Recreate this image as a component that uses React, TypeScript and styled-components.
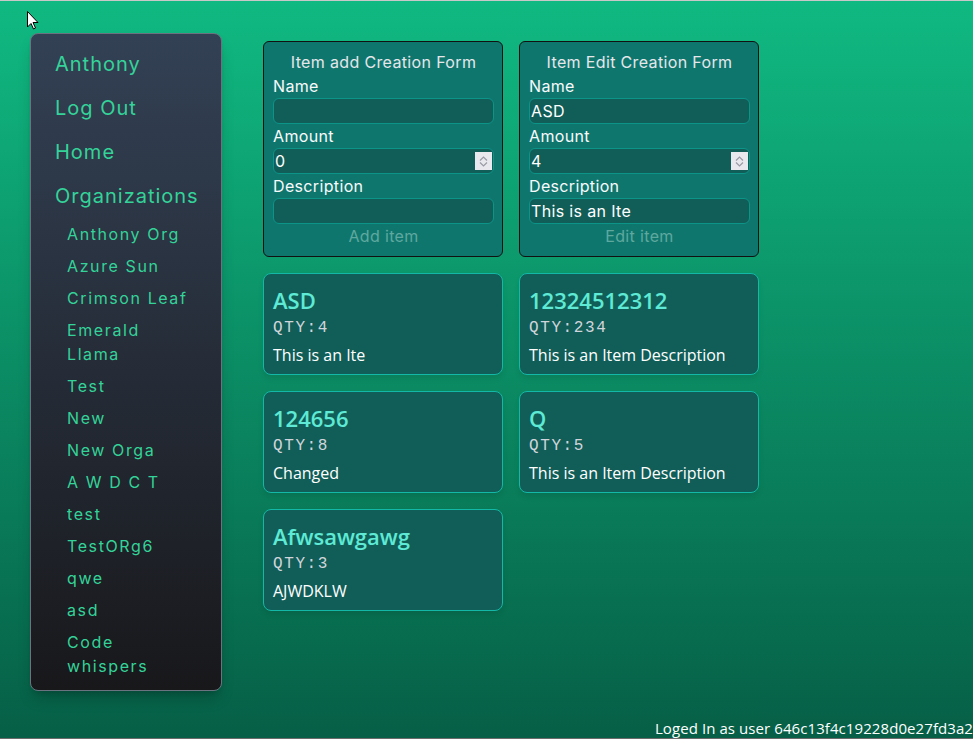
import React from "react";
import styled, { createGlobalStyle } from "styled-components";

const Global = createGlobalStyle`
  html, body { margin: 0; padding: 0; }
  body { font-family: Inter, "Noto Sans", sans-serif; }
  * { box-sizing: border-box; }
`;

const Page = styled.div`
  position: relative;
  min-height: 100vh;
  display: flex;
  flex-direction: column;
  background: linear-gradient(to bottom, #10b981, #065f46);
  border-top: 1px solid #c8c8c8;
  border-bottom: 1px solid #6b6b6b;
  overflow: hidden;
`;

const Layout = styled.div`
  display: flex;
  align-items: flex-start;
  gap: 41px;
  padding: 32px 0 0 30px;
`;

const Sidebar = styled.nav`
  width: 192px;
  display: flex;
  flex-direction: column;
  padding: 16px 24px 12px 24px;
  border: 1px solid #6b7280;
  border-radius: 8px;
  background: linear-gradient(to bottom, #334155, #18181b);
  box-shadow: 0 10px 15px -3px rgba(0, 0, 0, 0.2), 0 4px 6px -4px rgba(0, 0, 0, 0.2);
`;

const NavLink = styled.a<{ $last?: boolean }>`
  display: block;
  font-size: 20px;
  line-height: 28px;
  letter-spacing: 0.05em;
  color: #34d399;
  margin-bottom: ${(p) => (p.$last ? "0" : "16px")};
  text-decoration: none;
`;

const OrgList = styled.div`
  display: flex;
  flex-direction: column;
  gap: 8px;
  margin-top: 12px;
  padding-left: 12px;
`;

const OrgLink = styled.a`
  display: block;
  max-width: 124px;
  font-size: 16px;
  line-height: 24px;
  letter-spacing: 0.1em;
  color: #34d399;
  text-decoration: none;
`;

const Content = styled.main`
  display: grid;
  grid-template-columns: 240px 240px;
  gap: 16px;
  margin-top: 8px;
  align-items: start;
`;

const FormCard = styled.form`
  display: flex;
  flex-direction: column;
  padding: 8px 8px 8px 9px;
  background: #0f766e;
  border: 1px solid #111;
  border-radius: 6px;
  color: #fff;
  letter-spacing: 0.35px;
`;

const FormTitle = styled.div`
  text-align: center;
  font-size: 16px;
  line-height: 24px;
  color: #e5e7eb;
`;

const Label = styled.label`
  font-size: 16px;
  line-height: 24px;
  color: #f9fafb;
`;

const FieldWrap = styled.div`
  position: relative;
  width: 221px;
`;

const Input = styled.input`
  display: block;
  width: 100%;
  height: 26px;
  padding: 0 1px;
  border: 1px solid #0d9488;
  border-radius: 6px;
  background: #115e59;
  color: #fff;
  font-family: Inter, "Noto Sans", sans-serif;
  font-size: 16px;
  letter-spacing: 0.35px;
  outline: none;
`;

const Spinner = styled.div`
  position: absolute;
  right: 2px;
  top: 4px;
  width: 17px;
  height: 18px;
  background: #e8e8ee;
  display: flex;
  flex-direction: column;
  align-items: center;
  justify-content: center;
  gap: 1px;
`;

const SubmitButton = styled.button`
  align-self: center;
  background: none;
  border: none;
  padding: 0;
  font-family: Inter, "Noto Sans", sans-serif;
  font-size: 16px;
  line-height: 24px;
  letter-spacing: 0.35px;
  color: #5fa89f;
`;

const ItemCard = styled.div`
  display: flex;
  flex-direction: column;
  padding: 10px 9px 7px;
  background: #115e59;
  border: 1px solid #14b8a6;
  border-radius: 8px;
  box-shadow: 0 4px 6px -1px rgba(0, 0, 0, 0.1);
`;

const ItemTitle = styled.h2`
  margin: 0;
  font-family: "Open Sans", "Noto Sans", sans-serif;
  font-weight: 600;
  font-size: 22px;
  line-height: 32px;
  color: #5eead4;
`;

const Qty = styled.div`
  font-family: "Liberation Mono", "DejaVu Sans Mono", monospace;
  font-size: 16px;
  line-height: 24px;
  letter-spacing: 0.1em;
  color: #d1d5db;
`;

const Desc = styled.p`
  margin: 3px 0 0;
  font-family: "Open Sans", "Noto Sans", sans-serif;
  font-size: 16px;
  line-height: 24px;
  color: #fff;
`;

const Footer = styled.footer`
  margin-top: auto;
  text-align: right;
  font-family: "Open Sans", "Noto Sans", sans-serif;
  font-size: 15px;
  line-height: 20px;
  letter-spacing: 0.08px;
  color: #fff;
  white-space: nowrap;
`;

const Cursor = styled.svg`
  position: absolute;
  left: 27px;
  top: 10px;
`;

const orgs = [
  "Anthony Org",
  "Azure Sun",
  "Crimson Leaf",
  "Emerald Llama",
  "Test",
  "New",
  "New Orga",
  "A W D C T",
  "test",
  "TestORg6",
  "qwe",
  "asd",
  "Code whispers",
];

const items = [
  { name: "ASD", qty: 4, desc: "This is an Ite" },
  { name: "12324512312", qty: 234, desc: "This is an Item Description" },
  { name: "124656", qty: 8, desc: "Changed" },
  { name: "Q", qty: 5, desc: "This is an Item Description" },
  { name: "Afwsawgawg", qty: 3, desc: "AJWDKLW" },
];

const SpinIcon = () => (
  <Spinner>
    <svg width="9" height="5" viewBox="0 0 9 5">
      <path d="M1 4.5 L4.5 1 L8 4.5" fill="none" stroke="#9a9aa6" strokeWidth="1.2" />
    </svg>
    <svg width="9" height="5" viewBox="0 0 9 5">
      <path d="M1 0.5 L4.5 4 L8 0.5" fill="none" stroke="#9a9aa6" strokeWidth="1.2" />
    </svg>
  </Spinner>
);

const ItemForm = ({
  title,
  button,
  name,
  amount,
  desc,
}: {
  title: string;
  button: string;
  name: string;
  amount: string;
  desc: string;
}) => (
  <FormCard onSubmit={(e) => e.preventDefault()}>
    <FormTitle>{title}</FormTitle>
    <Label>Name</Label>
    <FieldWrap>
      <Input type="text" defaultValue={name} />
    </FieldWrap>
    <Label>Amount</Label>
    <FieldWrap>
      <Input type="text" defaultValue={amount} />
      <SpinIcon />
    </FieldWrap>
    <Label>Description</Label>
    <FieldWrap>
      <Input type="text" defaultValue={desc} />
    </FieldWrap>
    <SubmitButton type="submit">{button}</SubmitButton>
  </FormCard>
);

export default function App() {
  return (
    <>
      <Global />
      <Page>
        <Layout>
          <Sidebar>
            <NavLink>Anthony</NavLink>
            <NavLink>Log Out</NavLink>
            <NavLink>Home</NavLink>
            <NavLink $last>Organizations</NavLink>
            <OrgList>
              {orgs.map((o) => (
                <OrgLink key={o}>{o}</OrgLink>
              ))}
            </OrgList>
          </Sidebar>
          <Content>
            <ItemForm title="Item add Creation Form" button="Add item" name="" amount="0" desc="" />
            <ItemForm
              title="Item Edit Creation Form"
              button="Edit item"
              name="ASD"
              amount="4"
              desc="This is an Ite"
            />
            {items.map((it) => (
              <ItemCard key={it.name}>
                <ItemTitle>{it.name}</ItemTitle>
                <Qty>QTY:{it.qty}</Qty>
                <Desc>{it.desc}</Desc>
              </ItemCard>
            ))}
          </Content>
        </Layout>
        <Footer>Loged In as user 646c13f4c19228d0e27fd3a2</Footer>
        <Cursor width="12" height="19" viewBox="0 0 12 19">
          <path d="M0.5 0.5 L0.5 16 L4 12.5 L6.5 18 L8.5 17 L6 11.5 L11 11.5 Z" fill="#fff" stroke="#000" strokeWidth="1" />
        </Cursor>
      </Page>
    </>
  );
}
